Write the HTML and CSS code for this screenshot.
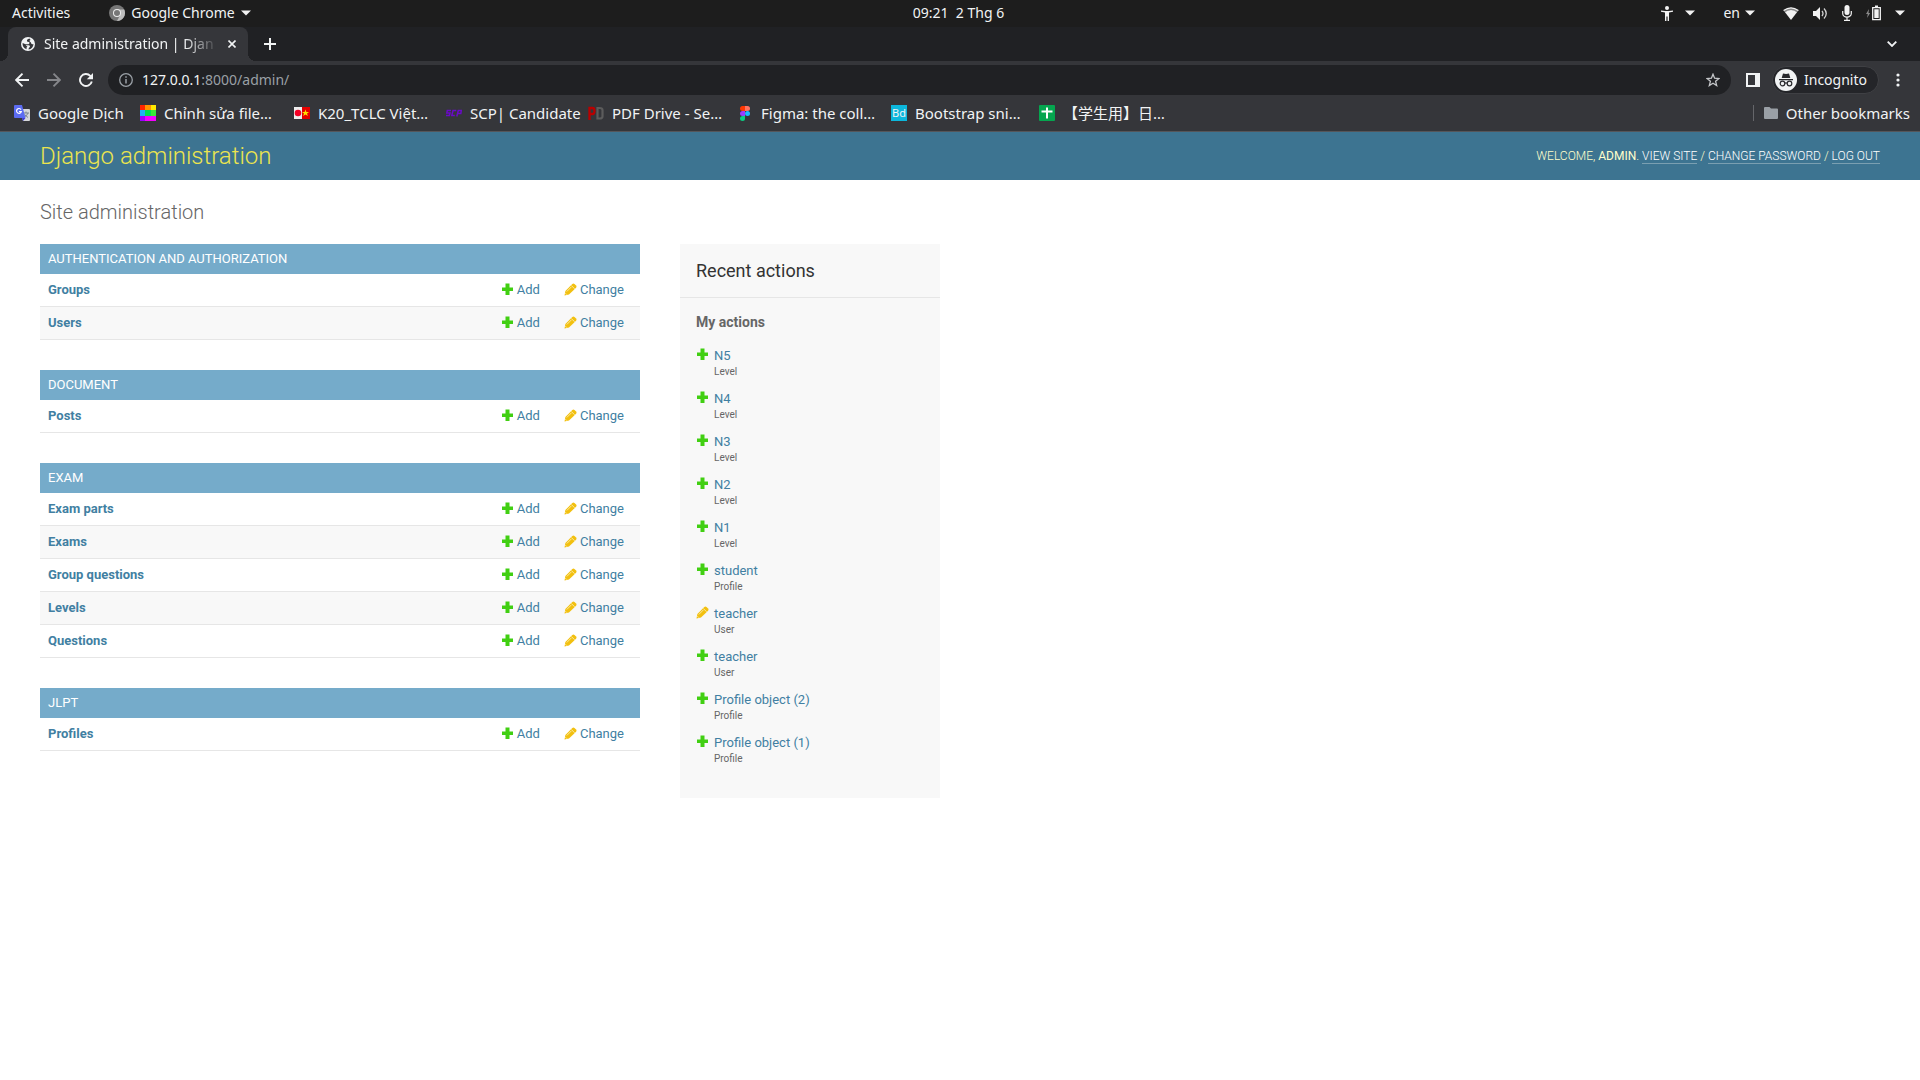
FILE: index.html
```html
<!DOCTYPE html>
<html lang="en">
<head>
<meta charset="utf-8">
<title>Site administration | Django site admin</title>
<link rel="stylesheet" href="styles.css">
</head>
<body>
<svg class="sprite" aria-hidden="true">
  <symbol id="add" viewBox="0 0 13 13"><path fill="#41cf12" d="M4.500.500h4v4H12v3.500H8.500v4h-4v-4H1V4.500h3.500z"/></symbol>
  <symbol id="edit" viewBox="0 0 13 13"><path fill="#f2c010" d="M8.300.900q1.100-.9 2.200 0l1.600 1.600q.9 1.100 0 2.200L5 11.600.500 12.500l.9-4.500z"/><path d="M7.200 2.400l3.400 3.400M2.800 8.500l4.600-4.600M1.400 10.200l1.400 1.400" stroke="#fbe9a0" fill="none"/></symbol>
  <symbol id="caret" viewBox="0 0 10 6"><path fill="#f2f2f2" d="M0 .5h10L5 5.500z"/></symbol>
</svg>

<div class="system-bar">
  <div class="system-left">
    <button class="plain" type="button">Activities</button>
    <button class="plain app-menu" type="button">
      <svg width="16" height="16" viewBox="0 0 16 16"><circle cx="8" cy="8" r="8" fill="#777"/><path d="M8 4.500h7.200A8 8 0 0 1 8 16l3.300-6.200z" fill="#bdbdbd"/><circle cx="8" cy="8" r="4" fill="#eee"/><circle cx="8" cy="8" r="3" fill="#777"/></svg>
      <span>Google Chrome</span>
      <svg width="10" height="6"><use href="#caret"/></svg>
    </button>
  </div>
  <time class="clock">09:21&nbsp; 2 Thg 6</time>
  <div class="system-right">
    <button class="plain access" type="button" aria-label="Accessibility">
      <svg width="12" height="15" viewBox="0 0 12 15"><circle cx="6" cy="2" r="2" fill="#f2f2f2"/><path d="M0 4.500l4 .5h4l4-.5v1.300l-4 .8V15H6.600v-4.500H5.400V15H4V6.600l-4-.8z" fill="#f2f2f2"/></svg>
      <svg width="10" height="6"><use href="#caret"/></svg>
    </button>
    <button class="plain language" type="button">en <svg width="10" height="6"><use href="#caret"/></svg></button>
    <button class="plain status" type="button" aria-label="System status">
      <svg width="16" height="13" viewBox="0 0 16 13"><path d="M.5 3.500Q8-2 15.500 3.500L13.800 5.500Q8 1.200 2.200 5.500z" fill="#888"/><path d="M.6 3.600Q8-2 15.400 3.600" stroke="#f2f2f2" stroke-width="1.200" fill="none"/><path d="M2 5.300Q8 .8 14 5.300L8 13z" fill="#f2f2f2"/></svg>
      <svg width="15" height="13" viewBox="0 0 15 13"><path d="M0 4h3l4-4v13L3 9H0z" fill="#f2f2f2"/><path d="M9 4q2 2.500 0 5M11 1.500q4.500 5 0 10" stroke="#d0d0d0" stroke-width="1.300" fill="none"/></svg>
      <svg width="10" height="16" viewBox="0 0 10 16"><rect x="2.500" width="5" height="10" rx="2.500" fill="#f2f2f2"/><path d="M.7 6v2.500a4.300 3.600 0 0 0 8.600 0V6M5 12v3M2 15.300h6" stroke="#f2f2f2" stroke-width="1.200" fill="none"/></svg>
      <svg width="15" height="16" viewBox="0 0 15 16"><path d="M3 4L0 9h1.800L1 13l3.200-5H2.500z" fill="#8a8a8a"/><path d="M6.700 2.700h7.600v12H6.700z" stroke="#f2f2f2" stroke-width="1.300" fill="none"/><path d="M9 .5h3v2H9zM8.300 4.300h4.400v8.800H8.300z" fill="#f2f2f2"/></svg>
      <svg width="10" height="6"><use href="#caret"/></svg>
    </button>
  </div>
</div>

<div class="tab-strip">
  <div class="tab">
    <svg width="14" height="14" viewBox="0 0 14 14"><circle cx="7" cy="7" r="7" fill="#f1f3f4"/><path d="M8.500 1.600Q5.500 2.500 6 4.200q.2.900 2.200.8.800 1.600-.6 2.200-1.600.2-3 .1L1.600 6q-.5 4.500 3.900 6.300-.3-2 .9-2.800Q4.500 8.800 4.800 8.200H8q1.600.6.800 1.900-1.300.9-1.300 2.400 4.600-.6 5-5.500-1.600.6-2.300-.4.200-1.500-1.400-2.200-1-1 .8-1.300z" fill="#35363a"/></svg>
    <span class="tab-title">Site administration | Djan</span>
    <button class="plain" type="button" aria-label="Close tab"><svg width="8" height="8" viewBox="0 0 8 8"><path d="M.5.500l7 7M7.500.500l-7 7" stroke="#f1f3f4" stroke-width="1.600"/></svg></button>
  </div>
  <button class="plain new-tab" type="button" aria-label="New tab"><svg width="12" height="12" viewBox="0 0 12 12"><path d="M6 0v12M0 6h12" stroke="#f1f3f4" stroke-width="2"/></svg></button>
  <button class="plain tab-search" type="button" aria-label="Search tabs"><svg width="10" height="6" viewBox="0 0 10 6"><path d="M.7.700L5 5 9.300.700" stroke="#f1f3f4" stroke-width="1.800" fill="none"/></svg></button>
</div>

<div class="toolbar">
  <div class="nav-buttons">
    <button class="plain" type="button" aria-label="Back"><svg width="14" height="14" viewBox="0 0 14 14"><path d="M14 7H1.500M7.500.700L1.200 7l6.300 6.300" stroke="#f1f3f4" stroke-width="1.900" fill="none"/></svg></button>
    <button class="plain" type="button" aria-label="Forward"><svg width="14" height="14" viewBox="0 0 14 14"><path d="M0 7h12.500M6.500.700L12.800 7l-6.300 6.300" stroke="#85868a" stroke-width="1.900" fill="none"/></svg></button>
    <button class="plain" type="button" aria-label="Reload"><svg width="14" height="14" viewBox="0 0 14 14"><path d="M12.800 8.500A6 6 0 1 1 11.300 2.800L13 4.500" stroke="#f1f3f4" stroke-width="1.900" fill="none"/><path d="M14 0v6.200H7.800z" fill="#f1f3f4"/></svg></button>
  </div>
  <div class="address">
    <svg width="14" height="14" viewBox="0 0 14 14"><circle cx="7" cy="7" r="6.300" fill="none" stroke="#9aa0a6" stroke-width="1.300"/><path d="M7 6v4.500M7 3.300v1.500" stroke="#9aa0a6" stroke-width="1.500"/></svg>
    <span class="url"><span class="host">127.0.0.1</span>:8000/admin/</span>
    <button class="plain" type="button" aria-label="Bookmark this page"><svg width="14" height="14" viewBox="0 0 14 14"><path d="M7 1.200l1.600 4 4.300.3-3.300 2.800 1.100 4.200L7 10.200l-3.700 2.300 1.100-4.200L1.100 5.500l4.300-.3z" stroke="#c4c6c9" stroke-width="1.300" fill="none"/></svg></button>
  </div>
  <button class="plain panel" type="button" aria-label="Side panel"><svg width="14" height="14" viewBox="0 0 14 14"><path d="M0 0h14v14H0zM2 2v10h7V2z" fill="#f1f3f4" fill-rule="evenodd"/></svg></button>
  <button class="profile" type="button">
    <svg width="22" height="22" viewBox="0 0 22 22"><circle cx="11" cy="11" r="11" fill="#f1f3f4"/><path d="M8 4.500l3 .6 3-.6L15.300 9H6.700zM4 10h14v1.300H4z" fill="#27282c"/><g fill="none" stroke="#27282c" stroke-width="1.200"><circle cx="7.500" cy="14.500" r="2.300"/><circle cx="14.500" cy="14.500" r="2.300"/><path d="M9.800 14.200q1.200-.8 2.400 0"/></g></svg>
    <span>Incognito</span>
  </button>
  <button class="plain more" type="button" aria-label="Menu"><svg width="4" height="14" viewBox="0 0 4 14"><g fill="#f1f3f4"><circle cx="2" cy="2" r="1.600"/><circle cx="2" cy="7" r="1.600"/><circle cx="2" cy="12" r="1.600"/></g></svg></button>
</div>

<nav class="bookmarks" aria-label="Bookmarks">
  <div class="bookmark-list">
    <a href="#"><svg width="16" height="16" viewBox="0 0 16 16"><path d="M6 4h9q1 0 1 1v10q0 1-1 1H9z" fill="#d5d7da"/><path d="M9 8h6M12 6.500V8M14 8q-1 3-4 4M10.500 9.500l3.500 3" stroke="#7b8590" fill="none"/><path d="M1 0h7l3.500 13H1q-1 0-1-1V1q0-1 1-1z" fill="#5c6cf2"/><path d="M8 13h3.500L9 16z" fill="#3c38d8"/><path d="M7 4.600A2.400 2.400 0 1 0 7.300 6.500H5" stroke="#fff" stroke-width="1.200" fill="none"/></svg><span>Google Dịch</span></a>
    <a href="#"><svg width="16" height="16" viewBox="0 0 16 16"><path d="M0 0h5v5H0z" fill="#ff2400"/><path d="M5 0h6v5H5z" fill="#ff9400"/><path d="M11 0h5v5h-5z" fill="#ffe800"/><path d="M0 5h5v6H0z" fill="#1eb4f5"/><path d="M5 5h6v6H5z" fill="#00df52"/><path d="M11 5h5v6h-5z" fill="#38e838"/><path d="M0 11h5v5H0z" fill="#9b00ff"/><path d="M5 11h11v5H5z" fill="#f400ff"/></svg><span>Chỉnh sửa file…</span></a>
    <a href="#"><svg width="16" height="16" viewBox="0 0 16 16"><path d="M0 2h8v12H0z" fill="#eee"/><circle cx="4" cy="8" r="3.300" fill="#f50025"/><path d="M8 2h8v12H8z" fill="#e50000"/><path d="M11.500 4.500l.9 2.400H15l-2 1.600.8 2.500-2.300-1.500L9.200 11l.8-2.500-2-1.600h2.600z" fill="#ffe000"/></svg><span>K20_TCLC Việt…</span></a>
    <a href="#"><svg width="16" height="16" viewBox="0 0 16 16"><path d="M5 5.500H1.300L.8 8H4l-.6 2.500H0M10.300 5.500H7L5.800 10.500h3M10.800 11.500l1.500-6h3L14.800 8.500h-3.300" stroke="#6a0ac8" stroke-width="1.500" fill="none"/></svg><span>SCP| Candidate</span></a>
    <a href="#"><svg width="16" height="16" viewBox="0 0 16 16"><path d="M1.500 15V3h3q2 0 2 3t-2 3h-2" stroke="#b90000" stroke-width="2.300" fill="none"/><path d="M9.500 3v10.500h2q3 0 3-2V5q0-2-3-2z" stroke="#5c5c5c" stroke-width="2.200" fill="none"/></svg><span>PDF Drive - Se…</span></a>
    <a href="#"><svg width="16" height="16" viewBox="0 0 16 16"><path d="M8 1H5.500a2.500 2.500 0 0 0 0 5H8z" fill="#ff3700"/><path d="M8 1h2.500a2.500 2.500 0 0 1 0 5H8z" fill="#ff7262"/><path d="M8 6H5.500a2.500 2.500 0 0 0 0 5H8z" fill="#9b3cff"/><circle cx="10.500" cy="8.500" r="2.500" fill="#1abcfe"/><path d="M8 11H5.500A2.500 2.500 0 1 0 8 13.500z" fill="#0acf83"/></svg><span>Figma: the coll…</span></a>
    <a href="#"><span class="bd-icon" aria-hidden="true">Bd</span><span>Bootstrap sni…</span></a>
    <a href="#"><svg width="16" height="16" viewBox="0 0 16 16"><rect width="16" height="16" rx="1" fill="#05a64f"/><path d="M8 2.500v11M2.500 6.500h11" stroke="#fff" stroke-width="2"/></svg><span>【学生用】日…</span></a>
  </div>
  <a class="other" href="#"><svg width="14" height="12" viewBox="0 0 14 12"><path d="M1 0h4.500L7 1.500h6q1 0 1 1V11q0 1-1 1H1q-1 0-1-1V1q0-1 1-1z" fill="#9aa0a6"/></svg><span>Other bookmarks</span></a>
</nav>

<header class="site-header">
  <h1><a href="#">Django administration</a></h1>
  <div class="user-tools">Welcome, <strong>admin</strong>. <a href="#">View site</a> / <a href="#">Change password</a> / <a href="#">Log out</a></div>
</header>

<main class="content">
  <h2 class="page-title">Site administration</h2>
  <div class="columns">
    <div class="modules">
      <table>
        <caption><a href="#">Authentication and Authorization</a></caption>
        <tr><th scope="row"><a href="#">Groups</a></th><td><a href="#"><svg><use href="#add"/></svg>Add</a></td><td><a href="#"><svg><use href="#edit"/></svg>Change</a></td></tr>
        <tr><th scope="row"><a href="#">Users</a></th><td><a href="#"><svg><use href="#add"/></svg>Add</a></td><td><a href="#"><svg><use href="#edit"/></svg>Change</a></td></tr>
      </table>
      <table>
        <caption><a href="#">Document</a></caption>
        <tr><th scope="row"><a href="#">Posts</a></th><td><a href="#"><svg><use href="#add"/></svg>Add</a></td><td><a href="#"><svg><use href="#edit"/></svg>Change</a></td></tr>
      </table>
      <table>
        <caption><a href="#">Exam</a></caption>
        <tr><th scope="row"><a href="#">Exam parts</a></th><td><a href="#"><svg><use href="#add"/></svg>Add</a></td><td><a href="#"><svg><use href="#edit"/></svg>Change</a></td></tr>
        <tr><th scope="row"><a href="#">Exams</a></th><td><a href="#"><svg><use href="#add"/></svg>Add</a></td><td><a href="#"><svg><use href="#edit"/></svg>Change</a></td></tr>
        <tr><th scope="row"><a href="#">Group questions</a></th><td><a href="#"><svg><use href="#add"/></svg>Add</a></td><td><a href="#"><svg><use href="#edit"/></svg>Change</a></td></tr>
        <tr><th scope="row"><a href="#">Levels</a></th><td><a href="#"><svg><use href="#add"/></svg>Add</a></td><td><a href="#"><svg><use href="#edit"/></svg>Change</a></td></tr>
        <tr><th scope="row"><a href="#">Questions</a></th><td><a href="#"><svg><use href="#add"/></svg>Add</a></td><td><a href="#"><svg><use href="#edit"/></svg>Change</a></td></tr>
      </table>
      <table>
        <caption><a href="#">JLPT</a></caption>
        <tr><th scope="row"><a href="#">Profiles</a></th><td><a href="#"><svg><use href="#add"/></svg>Add</a></td><td><a href="#"><svg><use href="#edit"/></svg>Change</a></td></tr>
      </table>
    </div>
    <aside class="recent">
      <h2>Recent actions</h2>
      <h3>My actions</h3>
      <ul>
        <li><svg><use href="#add"/></svg><a href="#">N5</a><span>Level</span></li>
        <li><svg><use href="#add"/></svg><a href="#">N4</a><span>Level</span></li>
        <li><svg><use href="#add"/></svg><a href="#">N3</a><span>Level</span></li>
        <li><svg><use href="#add"/></svg><a href="#">N2</a><span>Level</span></li>
        <li><svg><use href="#add"/></svg><a href="#">N1</a><span>Level</span></li>
        <li><svg><use href="#add"/></svg><a href="#">student</a><span>Profile</span></li>
        <li><svg><use href="#edit"/></svg><a href="#">teacher</a><span>User</span></li>
        <li><svg><use href="#add"/></svg><a href="#">teacher</a><span>User</span></li>
        <li><svg><use href="#add"/></svg><a href="#">Profile object (2)</a><span>Profile</span></li>
        <li><svg><use href="#add"/></svg><a href="#">Profile object (1)</a><span>Profile</span></li>
      </ul>
    </aside>
  </div>
</main>
</body>
</html>
```

FILE: styles.css
```css
* {
  box-sizing: border-box;
}

body {
  margin: 0;
  background: #fff;
  color: #333;
  font: 13px/16px Roboto, "Liberation Sans", sans-serif;
}

a {
  color: #417fa2;
  text-decoration: none;
}

.sprite {
  display: none;
}

svg {
  flex: none;
}

/* Desktop and browser bars */
.system-bar,
.tab-strip,
.toolbar,
.bookmarks {
  display: flex;
  align-items: center;
  color: #f1f3f4;
  font: 14px/20px "Noto Sans", "Noto Sans CJK JP", sans-serif;
}

.plain,
.profile {
  display: flex;
  align-items: center;
  padding: 0;
  border: 0;
  background: none;
  color: inherit;
  font: inherit;
}

.system-bar {
  display: grid;
  grid-template-columns: 1fr auto 1fr;
  height: 27px;
  padding: 0 15px 1px 12px;
  background: #1d1d1d;
}

.system-left,
.system-right {
  display: flex;
  align-items: center;
}

.system-left {
  gap: 39px;
}

.system-right {
  justify-content: flex-end;
  gap: 28px;
}

.app-menu {
  gap: 6px;
}

.access {
  gap: 12px;
}

.language {
  gap: 5px;
}

.status {
  gap: 14px;
}

.tab-strip {
  height: 34px;
  padding: 0 23px 0 8px;
  background: #202124;
}

.tab {
  position: relative;
  display: flex;
  align-items: center;
  width: 240px;
  height: 34px;
  padding: 0 12px 0 13px;
  border-radius: 8px 8px 0 0;
  background: #35363a;
}

.tab::before,
.tab::after {
  content: "";
  position: absolute;
  bottom: 0;
  width: 8px;
  height: 8px;
}

.tab::before {
  right: 100%;
  background: radial-gradient(circle at 0 0, #202124 8px, #35363a 8px);
}

.tab::after {
  left: 100%;
  background: radial-gradient(circle at 100% 0, #202124 8px, #35363a 8px);
}

.tab-title {
  flex: 1;
  margin: 0 9px;
  overflow: hidden;
  white-space: nowrap;
  -webkit-mask-image: linear-gradient(90deg, #000 80%, transparent);
  mask-image: linear-gradient(90deg, #000 80%, transparent);
}

.new-tab {
  margin-left: 16px;
}

.tab-search {
  margin-left: auto;
}

.toolbar {
  height: 38px;
  padding: 0 20px 0 15px;
  background: #35363a;
}

.nav-buttons {
  display: flex;
  gap: 18px;
}

.address {
  display: flex;
  flex: 1;
  align-items: center;
  gap: 9px;
  height: 30px;
  margin: 0 15px;
  padding: 0 11px;
  border-radius: 15px;
  background: #202124;
}

.url {
  flex: 1;
  color: #9aa0a6;
}

.host {
  color: #f1f3f4;
}

.profile {
  gap: 7px;
  height: 28px;
  margin: 0 17px 0 12px;
  padding: 0 11px 0 2px;
  border: 1px solid #3f4044;
  border-radius: 14px;
  background: #242529;
}

.bookmarks {
  justify-content: space-between;
  height: 33px;
  padding: 0 10px 5px 14px;
  border-bottom: 1px solid #55565a;
  background: #35363a;
  font-size: 15px;
}

.bookmarks a {
  display: flex;
  align-items: center;
  gap: 8px;
  color: #f1f3f4;
  white-space: nowrap;
}

.bookmark-list {
  display: grid;
  grid-template-columns: 126px 154px 152px 142px 149px 154px 148px auto;
}

.bd-icon {
  width: 16px;
  height: 16px;
  background: #0cb7dc;
  font-size: 11px;
  line-height: 16px;
  text-align: center;
}

.bookmarks .other {
  padding-left: 10px;
  border-left: 1px solid #65666a;
  line-height: 16px;
}

/* Admin site */
.site-header {
  display: flex;
  align-items: center;
  justify-content: space-between;
  padding: 10px 40px;
  background: #3d7491;
  color: #ffc;
}

.site-header h1 {
  margin: 0;
  font-size: 24px;
  font-weight: 300;
  line-height: 28px;
}

.site-header h1 a {
  color: #ece54e;
}

.user-tools {
  font-size: 12px;
  font-weight: 300;
  line-height: 14px;
  text-transform: uppercase;
}

.user-tools a {
  border-bottom: 1px solid #7a9fb1;
  color: #fff;
}

.content {
  padding: 20px 40px;
}

.page-title {
  margin: 0 0 20px;
  color: #666;
  font-size: 20px;
  font-weight: 300;
  line-height: 24px;
}

.columns {
  display: flex;
  align-items: flex-start;
  gap: 40px;
}

.modules {
  display: grid;
  flex: 0 1 600px;
  gap: 30px;
}

table {
  width: 100%;
  border-collapse: collapse;
}

caption {
  padding: 7px 8px;
  background: #75abca;
  font-size: 13px;
  text-align: left;
  text-transform: uppercase;
}

caption a {
  color: #fff;
}

tr:nth-child(even) {
  background: #f8f8f8;
}

th,
td {
  padding: 8px;
  border-bottom: 1px solid #e6e6e6;
  text-align: left;
}

th {
  width: 100%;
}

td a {
  display: flex;
  align-items: flex-start;
  gap: 3px;
  padding-right: 8px;
}

td svg,
li svg {
  width: 13px;
  height: 13px;
  margin-top: 1px;
}

.recent {
  flex: 0 1 260px;
  background: #f8f8f8;
}

.recent h2 {
  margin: 0;
  padding: 16px;
  border-bottom: 1px solid #e6e6e6;
  font-size: 18px;
  font-weight: 400;
  line-height: 21px;
}

.recent h3 {
  margin: 16px 16px 12px;
  color: #666;
  font-size: 14px;
  line-height: 16px;
}

.recent ul {
  margin: 0;
  padding: 0 16px 26px;
  list-style: none;
}

.recent li {
  display: grid;
  grid-template-columns: 13px 1fr;
  column-gap: 5px;
  padding: 5px 0;
  line-height: 17px;
}

.recent li span {
  grid-column: 2;
  color: #666;
  font-size: 10px;
  line-height: 16px;
}
```
